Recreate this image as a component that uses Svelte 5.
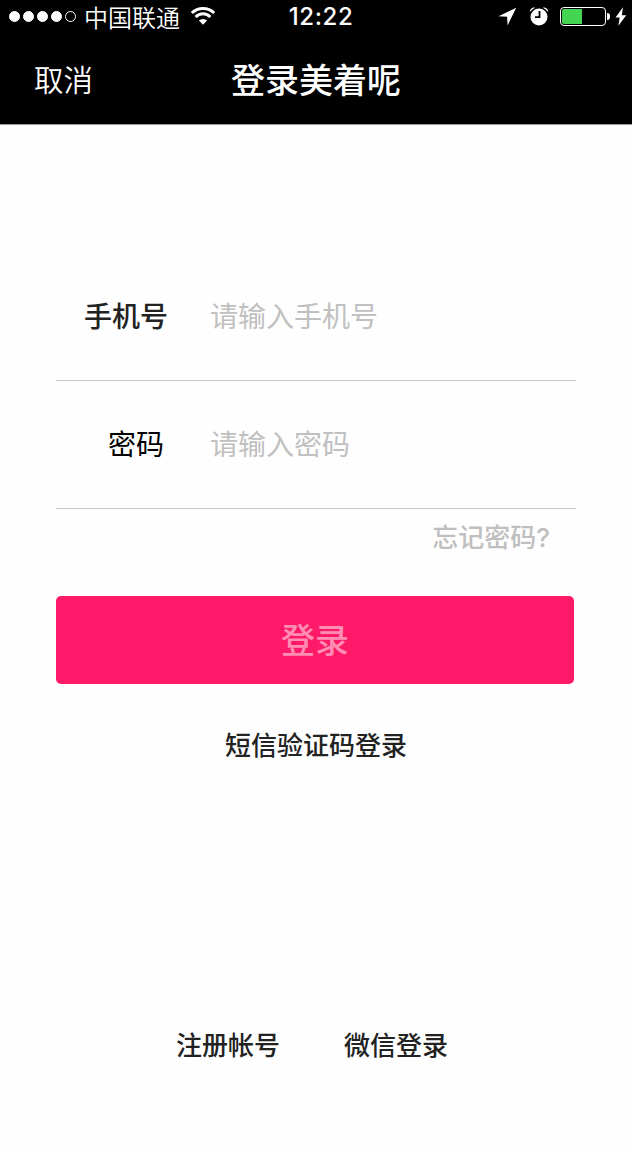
<script lang="ts">
	interface Field {
		name: string;
		label: string;
		placeholder: string;
		type: string;
	}

	const signal = 4;
	const battery = 48;

	const fields: Field[] = [
		{ name: 'phone', label: '手机号', placeholder: '请输入手机号', type: 'tel' },
		{ name: 'password', label: '密码', placeholder: '请输入密码', type: 'password' }
	];

	let values: Record<string, string> = $state({ phone: '', password: '' });
	let ready = $derived(values.phone !== '' && values.password !== '');
</script>

<div class="screen">
	<header>
		<div class="status">
			<div class="status-left">
				<div class="signal">
					{#each Array(5) as _, i}
						<i class:filled={i < signal}></i>
					{/each}
				</div>
				<span class="carrier">中国联通</span>
				<svg class="wifi" width="26" height="20" viewBox="0 0 26 20">
					<path d="M1.8 7.1a15.8 15.8 0 0 1 22.4 0" />
					<path d="M5.6 10.9a10.4 10.4 0 0 1 14.8 0" />
					<path class="solid" d="M8.9 14.6a5.9 5.9 0 0 1 8.2 0L13 18.8z" />
				</svg>
			</div>
			<span class="time">12:22</span>
			<div class="status-right">
				<svg class="location" width="19" height="19" viewBox="0 0 19 19">
					<path d="M18.2 0.7 0.5 9.3l8.6.5.5 8.6z" />
				</svg>
				<svg class="alarm" width="20" height="20" viewBox="0 0 20 20">
					<circle cx="10" cy="10.9" r="8.5" fill="#fff" />
					<path d="M0.6 5.2Q1.8 1.6 5.4 1.2L5.8 2Q3 3 1.4 5.6zM19.4 5.2Q18.2 1.6 14.6 1.2L14.2 2Q17 3 18.6 5.6z" fill="#fff" />
					<path d="M10.5 5v6.2H6" fill="none" stroke="#000" stroke-width="1.8" />
				</svg>
				<div class="battery">
					<div class="level" style="width: {battery}%"></div>
				</div>
				<div class="battery-cap"></div>
				<svg class="bolt" width="12" height="19" viewBox="0 0 12 19">
					<path d="M8 0.2 0.5 10.4h4.2L3.4 18.8 11.2 8.2H6.8z" />
				</svg>
			</div>
		</div>
		<nav>
			<button class="cancel" type="button">取消</button>
			<h1>登录美着呢</h1>
			<span></span>
		</nav>
	</header>

	<main>
		<form>
			{#each fields as field}
				<label class="field {field.name}">
					<span>{field.label}</span>
					<input type={field.type} placeholder={field.placeholder} bind:value={values[field.name]} />
				</label>
			{/each}
			<button class="forgot" type="button">忘记密码<span>?</span></button>
			<button class="submit" class:ready type="button">登录</button>
		</form>
		<button class="sms" type="button">短信验证码登录</button>
		<footer>
			<button type="button">注册帐号</button>
			<button type="button">微信登录</button>
		</footer>
	</main>
</div>

<style>
	:global(body) {
		margin: 0;
		background: #fff;
	}

	.screen {
		display: flex;
		flex-direction: column;
		width: 632px;
		height: 1150px;
		overflow: hidden;
		background: #fefefe;
		color: #222;
		font-family: 'Noto Sans CJK SC', sans-serif;
	}

	button {
		display: block;
		margin: 0;
		padding: 0;
		border: 0;
		background: none;
		color: inherit;
		font: inherit;
		white-space: nowrap;
	}

	header {
		height: 124px;
		border-bottom: 1px solid #999;
		background: #000;
		color: #fff;
	}

	.status,
	nav {
		display: grid;
		grid-template-columns: 1fr auto 1fr;
		align-items: center;
	}

	.status {
		height: 33px;
	}

	.status-left,
	.status-right,
	.signal {
		display: flex;
		align-items: center;
	}

	.status-left {
		padding-left: 9px;
	}

	.signal {
		gap: 3px;
	}

	.signal i {
		box-sizing: border-box;
		width: 11px;
		height: 11px;
		border: 1px solid #fff;
		border-radius: 50%;
	}

	.signal .filled {
		background: #fff;
	}

	.carrier {
		margin-left: 8px;
		font-size: 24px;
		font-weight: 350;
		line-height: 31px;
	}

	.wifi {
		margin: -2px 0 0 10px;
		fill: none;
		stroke: #fff;
		stroke-width: 2.9;
	}

	.wifi .solid {
		fill: #fff;
		stroke: none;
	}

	.time {
		margin-left: 10px;
		font: 500 24px/33px Inter, sans-serif;
		letter-spacing: 0.6px;
	}

	.status-right {
		justify-content: flex-end;
		padding-right: 5px;
	}

	.location,
	.bolt {
		fill: #fff;
	}

	.alarm {
		margin: -2px 11px 0 12px;
	}

	.battery {
		box-sizing: border-box;
		width: 46px;
		height: 19px;
		padding: 1px;
		border: 1px solid #fff;
		border-radius: 4px;
	}

	.level {
		height: 100%;
		border-radius: 2px 0 0 2px;
		background: #43d551;
	}

	.battery-cap {
		width: 3px;
		height: 7px;
		margin: 0 5px 0 1px;
		border-radius: 0 4px 4px 0;
		background: #fff;
	}

	nav {
		height: 91px;
	}

	.cancel {
		justify-self: start;
		margin-left: 34px;
		padding-bottom: 1px;
		font-size: 29.5px;
		font-weight: 350;
	}

	h1 {
		margin: 0;
		font-size: 34px;
		font-weight: 500;
	}

	main {
		display: flex;
		flex: 1;
		flex-direction: column;
		padding: 128px 56px 87px;
	}

	.field {
		display: flex;
		align-items: center;
		box-sizing: border-box;
		height: 128px;
		padding-bottom: 4px;
		border-bottom: 1px solid #c7c7c7;
		font-size: 28px;
	}

	.field span {
		width: 126px;
		padding-left: 28px;
		font-weight: 500;
	}

	.field.password span {
		width: 102px;
		padding-left: 52px;
		color: #000;
		font-weight: 400;
	}

	input {
		flex: 1;
		min-width: 0;
		padding: 0;
		border: 0;
		outline: 0;
		background: none;
		color: #222;
		font: inherit;
	}

	input::placeholder {
		color: #c0c0c0;
		opacity: 1;
	}

	.forgot {
		height: 38px;
		margin: 8px 26px 0 auto;
		color: #bfbfbf;
		font-size: 26px;
		font-weight: 500;
		line-height: 38px;
	}

	.forgot span {
		font-family: Inter, sans-serif;
		line-height: 1;
	}

	.submit {
		width: 518px;
		height: 88px;
		margin-top: 41px;
		padding-bottom: 3px;
		border-radius: 5px;
		background: #fe1a68;
		color: #ff8cb3;
		font-size: 34px;
		font-weight: 500;
	}

	.submit.ready {
		color: #fff;
	}

	.sms {
		align-self: center;
		margin-top: 41px;
		font-size: 26px;
		font-weight: 500;
		line-height: 38px;
	}

	footer {
		display: flex;
		justify-content: center;
		gap: 64px;
		margin-top: auto;
		padding-right: 8px;
		font-size: 26px;
		font-weight: 500;
		line-height: 38px;
	}
</style>
